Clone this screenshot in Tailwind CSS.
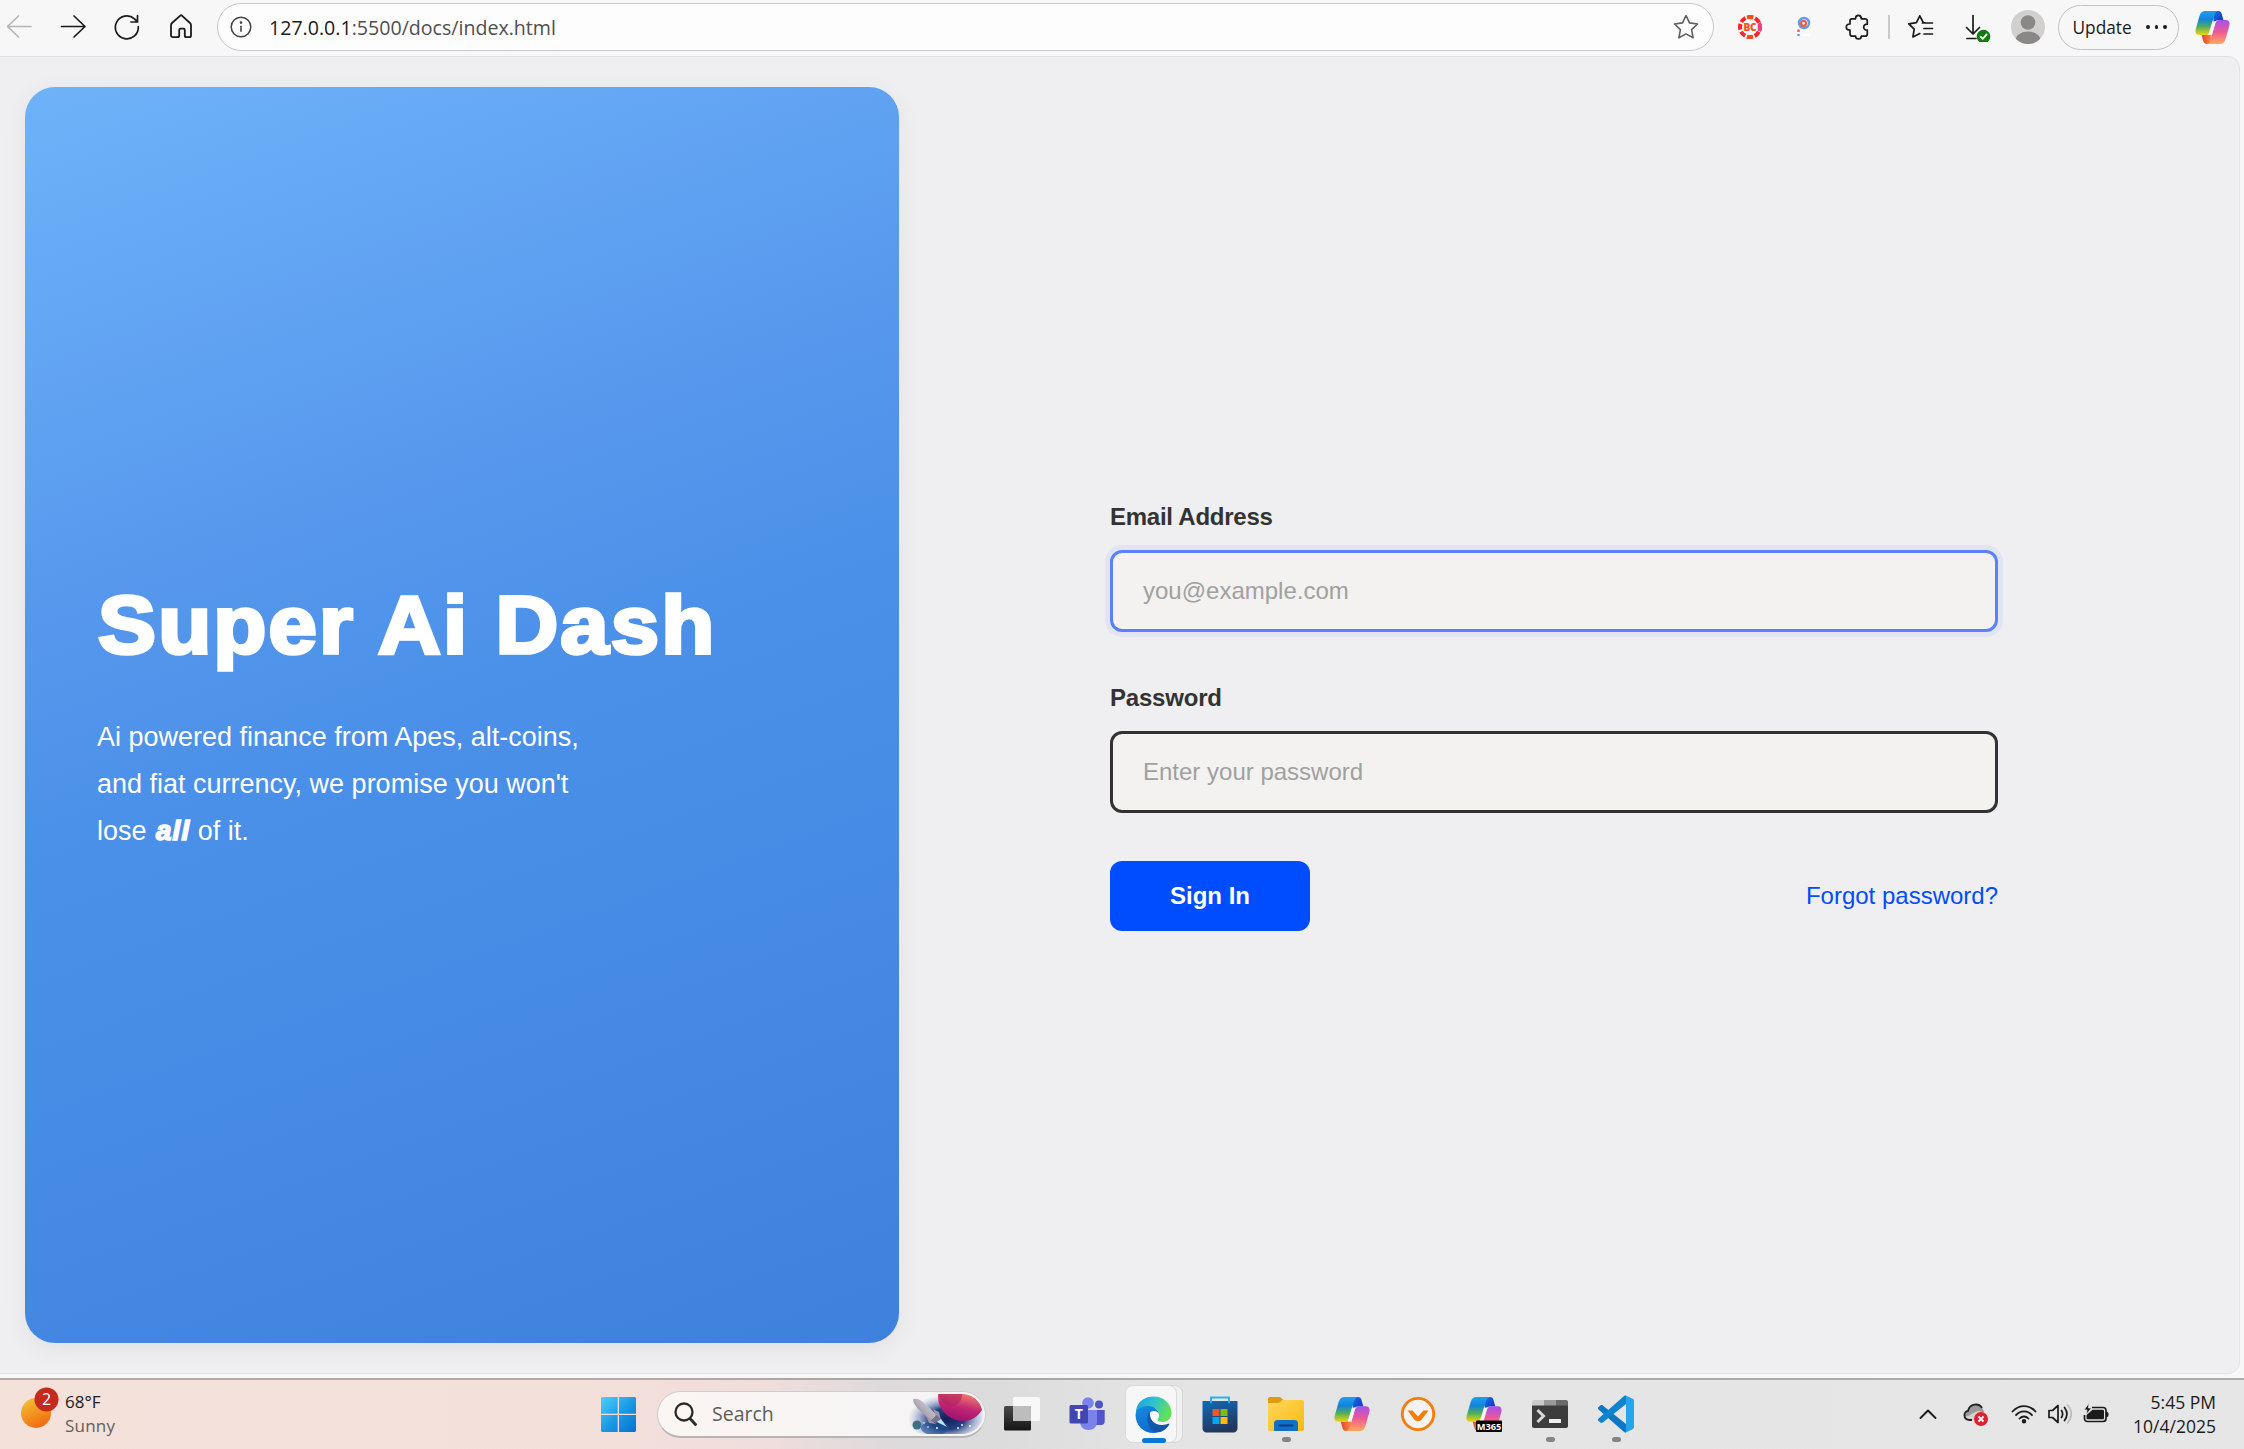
<!DOCTYPE html>
<html lang="en">
<head>
<meta charset="utf-8">
<title>Super Ai Dash</title>
<script src="https://cdn.jsdelivr.net/npm/@tailwindcss/browser@4"></script>
</head>
<body class="w-[2244px] h-[1449px] overflow-hidden flex flex-col bg-[#f7f7f7] font-['Open_Sans','Noto_Sans',sans-serif] text-[#1b1b1b]">

<svg width="0" height="0" class="absolute">
  <defs>
    <linearGradient id="cpA" x1="0" y1="0" x2="0" y2="1"><stop offset="0" stop-color="#1ea0f0"/><stop offset=".35" stop-color="#1283dc"/><stop offset=".65" stop-color="#4fae5c"/><stop offset="1" stop-color="#f8d30c"/></linearGradient>
    <linearGradient id="cpB" x1="0" y1="0" x2="0" y2="1"><stop offset="0" stop-color="#a550f0"/><stop offset=".5" stop-color="#ee5a93"/><stop offset="1" stop-color="#ffa95c"/></linearGradient>
    <linearGradient id="cpC" x1="0" y1="0" x2="1" y2="1"><stop offset="0" stop-color="#1a6fe8"/><stop offset="1" stop-color="#0a2fb4"/></linearGradient>
    <linearGradient id="cpD" x1="0" y1="0" x2="1" y2="0"><stop offset="0" stop-color="#e8412f"/><stop offset="1" stop-color="#fa8a3a"/></linearGradient>
    <symbol id="copilot" viewBox="0 0 36 36">
      <path d="M19 1h5c2 0 3 1.200 3.500 3l1.800 6.500h-5.300c-2.500 0-4 1-5 4z" fill="url(#cpC)"/>
      <path d="M17 35h-5c-2 0-3-1.200-3.500-3L6.700 25.500H12c2.500 0 4-1 5-4z" fill="url(#cpD)"/>
      <path d="M10.500 1H24c-2.500.5-3.500 2.500-4.200 5l-4.200 15c-.8 3-2.300 4.800-5 4.800H4.500C1 25.800-.2 23.200.7 19.700L4.500 6.500C5.500 2.800 7.500 1 10.500 1z" fill="url(#cpA)"/>
      <path d="M25.500 35H12c2.500-.5 3.500-2.500 4.200-5l4.200-15c.8-3 2.300-4.800 5-4.800h6.100c3.500 0 4.700 2.600 3.800 6.100L31.500 29.500c-1 3.700-3 5.500-6 5.500z" fill="url(#cpB)"/>
      <path d="M21.500 11.500l-4 13.800c-1 .5-2.500.5-3.800.2l4.200-13.800z" fill="#f4f4f4"/>
    </symbol>
  </defs>
</svg>

<!-- Browser toolbar -->
<header class="h-14 shrink-0 flex items-start pl-[5px] pr-[14px]">
  <nav class="flex items-center gap-[26px] h-[54px]">
    <svg class="w-7 h-7" viewBox="0 0 28 28" fill="none" stroke="#b5b5b5" stroke-width="1.700" stroke-linecap="round" stroke-linejoin="round"><path d="M26 13.500H3M13.500 3L2.500 13.500 13.500 24"/></svg>
    <svg class="w-7 h-7" viewBox="0 0 28 28" fill="none" stroke="#1b1b1b" stroke-width="1.700" stroke-linecap="round" stroke-linejoin="round"><path d="M2.500 13.500H25.500M15 3L26 13.500 15 24"/></svg>
    <svg class="w-7 h-7" viewBox="0 0 28 28" fill="none" stroke="#1b1b1b" stroke-width="1.700" stroke-linecap="round" stroke-linejoin="round"><path d="M25.300 13.500a11.500 11.500 0 1 1-3.800-7.700L24 8.300M24.500 2.500v6.500h-6.500"/></svg>
    <svg class="w-7 h-7" viewBox="0 0 28 28" fill="none" stroke="#1b1b1b" stroke-width="1.800" stroke-linejoin="round"><path d="M4 12.300c0-1 .4-1.700 1-2.300l8-7.200a1.600 1.600 0 0 1 2.200 0L23 10c.7.600 1 1.300 1 2.300v10.200c0 1-.7 1.700-1.700 1.700h-2.800c-1 0-1.700-.7-1.700-1.700V17c0-.8-.6-1.400-1.400-1.400h-2.800c-.8 0-1.400.6-1.400 1.400v5.500c0 1-.7 1.700-1.700 1.700H5.700c-1 0-1.700-.7-1.700-1.700z"/></svg>
  </nav>
  <div class="mt-[3px] ml-[22px] w-[1497px] h-12 shrink-0 rounded-full border border-[#c8c8c8] bg-[#fdfdfd] flex items-center pl-3 pr-[14px]">
    <svg class="w-[22px] h-[22px]" viewBox="0 0 22 22" fill="none" stroke="#444" stroke-width="1.500"><circle cx="11" cy="11" r="9.800"/><path d="M11 9.800v6" stroke-width="1.600"/><circle cx="11" cy="6.600" r=".6" fill="#444"/></svg>
    <span class="ml-[17px] pt-[2px] text-[19.6px] leading-none whitespace-nowrap text-[#1b1b1b]">127.0.0.1<span class="text-[#4f4f4f]">:5500/docs/index.html</span></span>
    <svg class="ml-auto w-[26px] h-[26px]" viewBox="0 0 26 26" fill="none" stroke="#5e5e5e" stroke-width="1.600" stroke-linejoin="round"><path d="M13 1.500l3.500 7.400 8 1.100-5.900 5.700 1.500 8.100L13 19.900l-7.100 3.900 1.500-8.100L1.500 10l8-1.100z"/></svg>
  </div>
  <div class="flex items-center h-[54px] flex-1 ml-[23px]">
    <svg class="w-[26px] h-[26px]" viewBox="0 0 26 26"><circle cx="13" cy="13" r="10" fill="none" stroke="#f9262b" stroke-width="4" stroke-dasharray="5.850 2" stroke-dashoffset="2.900"/><path d="M9.500 1.800a12 12 0 0 1 7 0l-1 3.200h-5zM9.500 24.200a12 12 0 0 0 7 0l-1-3.200h-5z" fill="#ff4d12"/><path d="M23.800 8a12 12 0 0 1 0 10l-3-1.500v-7z" fill="#f43b86"/><text x="13" y="16.700" text-anchor="middle" font-size="10" font-weight="800" fill="#ff4b16" font-family="Open Sans">BC</text></svg>
    <svg class="ml-[27px] w-[26px] h-[26px]" viewBox="0 0 26 26" fill="none"><circle cx="14" cy="9" r="5" stroke="#5b9bf3" stroke-width="2.400"/><circle cx="13.500" cy="9.300" r="2.500" stroke="#ee5a4a" stroke-width="2.200"/><path d="M8.500 15.500v2.500" stroke="#ef5b4c" stroke-width="2.400"/><path d="M8.500 20v2" stroke="#5b9bf3" stroke-width="2.400"/><path d="M11.500 21h8M11 17h8" stroke="#fff" stroke-width="1.500"/></svg>
    <svg class="ml-[29px] w-[26px] h-[26px]" viewBox="0 0 26 26" fill="none" stroke="#1b1b1b" stroke-width="1.700" stroke-linejoin="round"><path d="M7 4.800h3.500c0-2.200 1.200-3.500 2.900-3.500s2.900 1.300 2.900 3.500h3.700c1.400 0 2.300.9 2.300 2.300v3.100c-2.200-.2-3.600 1.200-3.600 3s1.400 3.300 3.600 3v3.700c0 1.400-.9 2.300-2.300 2.300h-3.700c0 1.600-1.200 2.700-2.800 2.700s-2.900-1.100-2.900-2.700H7.300C5.900 22.200 5 21.300 5 19.900v-3.800c-2.200 0-3.700-1.300-3.700-3.100S2.800 10 5 10V7c0-1.300.7-2.200 2-2.200z"/></svg>
    <span class="ml-[17px] w-[1.5px] h-6 bg-[#c9c9c9]"></span>
    <svg class="ml-[17px] w-[28px] h-[26px]" viewBox="0 0 28 26" fill="none" stroke="#1b1b1b" stroke-width="1.700" stroke-linecap="round" stroke-linejoin="round"><path d="M18 8.800l-1.800-.3L12.800 1.800 9.400 8.600l-7.600 1.200 5.400 5.400L5.900 23l6.900-3.400M15.500 9h10M17 14.500h8.500M17 20h8.500"/></svg>
    <svg class="ml-[26px] w-[30px] h-[30px]" viewBox="0 0 30 30" fill="none" stroke="#1b1b1b" stroke-width="1.700" stroke-linecap="round" stroke-linejoin="round"><path d="M12 3.500v18M5.500 15.500l6.500 6.500 6.500-6.500M6 26.500h9"/><circle cx="22.500" cy="24.500" r="6" fill="#107c10" stroke="#107c10"/><path d="M19.500 24.700l2.200 2.200 4-4.500" stroke="#fff"/></svg>
    <svg class="ml-[20px] w-[34px] h-[34px]" viewBox="0 0 34 34"><clipPath id="av"><circle cx="17" cy="17" r="17"/></clipPath><g clip-path="url(#av)"><rect width="34" height="34" fill="#d2d0ce"/><circle cx="17" cy="12.500" r="7.300" fill="#8a8886"/><ellipse cx="17" cy="30" rx="12.300" ry="8.500" fill="#8a8886"/></g></svg>
    <button class="ml-[13px] w-[121px] h-[45px] shrink-0 rounded-full border border-[#c2c2c2] flex items-center pl-[14px] text-[17.3px] leading-none"><span class="pt-[2px]">Update</span>
      <span class="flex gap-[5px] ml-auto mr-[11px]"><i class="size-[3.5px] rounded-full bg-[#1b1b1b]"></i><i class="size-[3.5px] rounded-full bg-[#1b1b1b]"></i><i class="size-[3.5px] rounded-full bg-[#1b1b1b]"></i></span>
    </button>
    <svg class="ml-auto w-[35px] h-[35px] shrink-0"><use href="#copilot"/></svg>
  </div>
</header>

<!-- Web page -->
<main class="relative -ml-3 w-[2252px] h-[1318px] shrink-0 rounded-xl border border-[#e2e2e4] bg-[#efeff1] flex">
  <section class="ml-9 mt-[30px] w-[874px] h-[1256px] shrink-0 rounded-[30px] bg-[linear-gradient(160deg,#6eb3f9_0%,#5798ed_33%,#4a90e8_50%,#3e81dd_100%)] shadow-[0_6px_24px_rgba(0,0,0,0.06)] pl-[72px] pt-[488px] text-white font-['Liberation_Sans',Arial,sans-serif]">
    <h1 class="text-[82px] leading-[100px] font-bold whitespace-nowrap tracking-[2px] pl-[1px] origin-left scale-x-[1.06] [-webkit-text-stroke:3.6px_white]">Super Ai Dash</h1>
    <p class="mt-[39px] text-[27px] leading-[46.8px] w-[520px]">Ai powered finance from Apes, alt-coins,<br>and fiat currency, we promise you won't<br>lose <em class="font-bold tracking-[1.2px] pl-[2px] text-[27.5px] leading-none [-webkit-text-stroke:1.6px_white]">all</em> of it.</p>
  </section>
  <form class="ml-[211px] mt-[446px] w-[888px] flex flex-col items-stretch text-[24px] font-['Liberation_Sans',Arial,sans-serif]">
    <label class="leading-7 font-bold text-[#333] tracking-[-0.25px]">Email Address</label>
    <div class="mt-[19px] h-[82px] rounded-xl border-3 border-[#5c80fa] bg-[#f3f2f0] ring-5 ring-[#e0e4f3] flex items-center pl-[30px] text-[#a0a0a0]">you@example.com</div>
    <label class="mt-[52px] leading-7 font-bold text-[#333] tracking-[-0.2px]">Password</label>
    <div class="mt-[19px] h-[82px] rounded-xl border-3 border-[#333] bg-[#f3f2f0] flex items-center pl-[30px] text-[#a0a0a0]">Enter your password</div>
    <div class="mt-12 flex justify-between items-center">
      <button type="button" class="w-[200px] h-[70px] rounded-xl bg-[#004cff] text-white font-bold">Sign In</button>
      <a class="text-[#004cff]">Forgot password?</a>
    </div>
  </form>
</main>

<!-- Taskbar -->
<footer class="mt-[4px] h-[71px] shrink-0 border-t-2 border-black/25 bg-[linear-gradient(90deg,#f4e1da_0px,#f3e0da_590px,#f0dedc_760px,#dedadc_880px,#dcdcdd_1000px,#e4e4e4_1150px,#e6e6e6_2244px)] flex">
  <div class="w-[590px] flex pl-5 pt-[4px]">
    <svg class="w-10 h-12" viewBox="0 0 40 48"><defs><linearGradient id="sun" x1=".2" y1="0" x2=".7" y2="1"><stop offset="0" stop-color="#f1c232"/><stop offset="1" stop-color="#f2660f"/></linearGradient></defs><circle cx="16" cy="29" r="15" fill="url(#sun)"/><circle cx="26.500" cy="15.500" r="12" fill="#c42b1c"/><text x="26.500" y="21.300" text-anchor="middle" font-size="16" fill="#fff" font-family="Open Sans">2</text></svg>
    <div class="ml-[5px] mt-[6px] text-[17px] leading-6"><div>68°F</div><div class="text-[#606060] tracking-[0.2px]">Sunny</div></div>
  </div>
  <div class="flex items-center h-[68px]">
    <svg class="ml-[11px] w-[35px] h-[35px]" viewBox="0 0 35 35"><defs><linearGradient id="win" x1="0" y1="0" x2="1" y2="1"><stop offset="0" stop-color="#4fd0fb"/><stop offset=".5" stop-color="#1c9be6"/><stop offset="1" stop-color="#0571cf"/></linearGradient></defs><path fill="url(#win)" d="M1 0h15.700v16.700H0V1zM18 0h16l1 1v15.700H18zM0 18h16.700v17H1l-1-1zM18 18h17v16l-1 1H18z"/></svg>
    <div class="ml-[21px] w-[329px] h-[47px] rounded-full border border-[#d3cccb] border-b-2 border-b-[#b9b4b4] bg-[linear-gradient(90deg,#fbf5f3,#f5f5f6)] flex items-center pl-4">
      <svg class="w-[23px] h-[24px]" viewBox="0 0 23 24" fill="none" stroke="#2a2a2a" stroke-width="2.300" stroke-linecap="round"><circle cx="10" cy="10" r="8.500"/><path d="M16 16.500l5.500 6" stroke-width="2.800"/></svg>
      <span class="ml-[15px] pt-px text-[19.500px] text-[#5c5c5c]">Search</span>
      <svg class="ml-auto mr-[2px] w-[76px] h-[40px]" viewBox="0 0 76 40">
        <defs>
          <radialGradient id="space"><stop offset="0" stop-color="#131f5c"/><stop offset=".45" stop-color="#24407f"/><stop offset=".8" stop-color="#8b9cc8" stop-opacity=".5"/><stop offset="1" stop-color="#c3cbe0" stop-opacity=".1"/></radialGradient>
          <linearGradient id="planet" x1=".7" y1="0" x2=".3" y2="1"><stop offset="0" stop-color="#f0806b"/><stop offset=".5" stop-color="#c02574"/><stop offset="1" stop-color="#96106c"/></linearGradient>
          <linearGradient id="hull" x1="0" y1="1" x2="1" y2="0"><stop offset="0" stop-color="#7a7484"/><stop offset="1" stop-color="#ece9f0"/></linearGradient>
          <clipPath id="pill"><path d="M0 0h55c12 0 21 9 21 20s-9 20-21 20H18C6 40 1 32 2 22z"/></clipPath>
        </defs>
        <g clip-path="url(#pill)">
          <ellipse cx="40" cy="25" rx="39" ry="24" fill="url(#space)"/>
          <ellipse cx="28" cy="34" rx="14" ry="7" fill="#1a4d92" opacity=".6"/>
          <path d="M31 0h28c9 2 15 9 16 16-5 8-12 11-20 11C41 26 30 15 31 0z" fill="url(#planet)"/>
          <path d="M32 0h23c0 8-5 12-11 12C38 12 33 7 32 0z" fill="#b3205a" opacity=".6"/>
          <circle cx="10" cy="31" r="4.500" fill="#3d6e86"/>
          <path d="M6 5c5-1 8 1 12 5l12 11-6 6L11 15C8 11 6 9 6 5z" fill="url(#hull)"/>
          <path d="M26 15l6 3 2 8-5-3zM19 22l5 4 5 4-7-1z" fill="#9a95a8"/>
          <path d="M24 27l6-6 4 5-5 3z" fill="#77718a"/>
          <path d="M30 28l4-3 6 8z" fill="#bfe3ff"/>
          <g fill="#fff"><circle cx="30" cy="34" r="1"/><circle cx="51" cy="34" r=".9"/><circle cx="55" cy="31" r=".9"/><circle cx="63" cy="32" r="1"/><circle cx="21" cy="33" r=".8"/><circle cx="17" cy="29" r=".8"/></g>
        </g>
      </svg>
    </div>
    <svg class="ml-[18px] w-[38px] h-[36px]" viewBox="0 0 38 36"><defs><linearGradient id="tv" x1="0" y1="0" x2="0" y2="1"><stop offset="0" stop-color="#4a4a4a"/><stop offset="1" stop-color="#151515"/></linearGradient></defs><rect x="0" y="10" width="27" height="24.500" rx="1.500" fill="url(#tv)"/><rect x="9" y="1" width="27" height="24" rx="1.500" fill="#fbfbfb" opacity=".9"/><path d="M9 10h18v15H9z" fill="#bdbdbd"/></svg>
    <svg class="ml-[26px] w-[38px] h-[36px]" viewBox="0 0 38 36"><circle cx="31" cy="8.500" r="4" fill="#4f55c4"/><path d="M28 14h8.700v11.500c0 2.200-1.500 3.500-3.500 3.500H28z" fill="#4f56cc"/><circle cx="20" cy="7" r="5.800" fill="#7b83eb"/><path d="M12 14h17v11.500c0 5-3.500 8.500-8.500 8.500S12 30.500 12 25.500z" fill="#7b83eb"/><rect x="1.500" y="9" width="18.500" height="18.500" rx="1.500" fill="#4147b0"/><text x="10.700" y="23.200" text-anchor="middle" font-size="14" font-weight="700" fill="#fff" font-family="Open Sans">T</text></svg>
    <div class="relative ml-[19px] w-[58px] h-[58px] flex">
      <div class="absolute inset-y-0 left-4 right-0 rounded-lg bg-[#f1f1f1] border border-[#d6d6d6]"></div>
      <div class="relative w-[52px] rounded-lg bg-[#f7f7f7] border border-[#dadada] flex items-center justify-center">
        <svg class="w-[37px] h-[37px] ml-[5px]" viewBox="0 0 37 37"><defs><linearGradient id="eg1" x1="0" y1="0" x2="1" y2=".4"><stop offset="0" stop-color="#1e96dc"/><stop offset=".5" stop-color="#2cc3d0"/><stop offset="1" stop-color="#63e05a"/></linearGradient><linearGradient id="eg2" x1="0" y1="0" x2=".5" y2="1"><stop offset="0" stop-color="#1b8ae0"/><stop offset="1" stop-color="#0a6ccf"/></linearGradient></defs>
          <path d="M1 14C3 5 10 .5 18.500.5 29 .5 36.500 8 36.500 17c0 5.500-4 9-9 9-3 0-5-1-5-2.300 0-.8 1.500-1.500 1.500-4.700 0-4.500-4-8-9.500-8C7.500 11 1.500 14.500.8 20z" fill="url(#eg1)"/>
          <path d="M.6 19C1 13.500 6 10 12.500 10c7 0 11 4.500 11.500 8-1-2-3-3-5-3-4 0-6 3.500-6 8 0 7 5 13 10 13.600C10 39 .5 30 .6 19z" fill="url(#eg2)"/>
          <path d="M12.500 22c0-2.500 1-5 2.500-6-1 7 4 13 12 13 3 0 5-1 6.500-1.500 1 0 1 .8.500 1.500-2.500 4-7 7.500-12.500 7.500-5-.5-9-7-9-14.500z" fill="#1257a8"/></svg>
      </div>
      <span class="absolute left-[17px] bottom-0 w-6 h-[5px] rounded-full bg-[#0b78d4]"></span>
    </div>
    <svg class="ml-[19px] w-[36px] h-[37px]" viewBox="0 0 36 37"><defs><linearGradient id="st" x1="0" y1="0" x2=".3" y2="1"><stop offset="0" stop-color="#0f6cb8"/><stop offset="1" stop-color="#22375f"/></linearGradient></defs><path d="M.5 5h35v27.500c0 2.200-1.800 4-4 4h-27c-2.200 0-4-1.800-4-4z" fill="url(#st)"/><path d="M9 7V1.500h18V7" fill="none" stroke="#2ab0ee" stroke-width="2"/><path fill="#f35325" d="M10.500 13h7v7h-7z"/><path fill="#81bc06" d="M18.500 13h7v7h-7z"/><path fill="#05a6f0" d="M10.500 21h7v7h-7z"/><path fill="#ffba08" d="M18.500 21h7v7h-7z"/></svg>
    <div class="relative ml-[30px]">
      <svg class="w-[36px] h-[34px]" viewBox="0 0 36 34"><defs><linearGradient id="fd" x1="0" y1="0" x2="1" y2="1"><stop offset="0" stop-color="#ffd75e"/><stop offset="1" stop-color="#f9b90f"/></linearGradient></defs><path d="M0 2C0 1 .8 0 2 0h10l4 3.500V9H0z" fill="#dd9d0c"/><path d="M0 6h11l3.500-3H34c1.200 0 2 .8 2 2v27c0 1-.8 2-2 2H2c-1.200 0-2-1-2-2z" fill="url(#fd)"/><path d="M6 34v-7.500C6 24 7.500 23 9.500 23h17c2 0 3.500 1 3.500 3.500V34z" fill="#0f6fc9"/><path d="M11.500 28.500h13" stroke="#0a3f80" stroke-width="2" stroke-linecap="round"/></svg>
      <span class="absolute left-[14px] top-[40px] w-[9px] h-[5px] rounded-full bg-[#858585]"></span>
    </div>
    <svg class="ml-[30px] w-9 h-9"><use href="#copilot"/></svg>
    <svg class="ml-[30px] w-9 h-9" viewBox="0 0 36 36"><circle cx="18" cy="18" r="15.700" fill="#f3f3f3" stroke="#f57c0a" stroke-width="2.800"/><path d="M7.500 14.500h5l5.500 6 5.500-6h5l-7 9.200c-1 1-2.200 1.300-3.500 1.300s-2.500-.3-3.500-1.300z" fill="#f57c0a"/></svg>
    <svg class="ml-[30px] w-9 h-9" viewBox="0 0 36 36"><use href="#copilot"/><rect x="10" y="24.500" width="26" height="11.500" rx="1" fill="#000"/><text x="23" y="33.600" text-anchor="middle" font-size="9.300" font-weight="700" fill="#fff" font-family="Open Sans">M365</text></svg>
    <div class="relative ml-[30px]">
      <svg class="w-[36px] h-[28px]" viewBox="0 0 36 28"><path d="M0 5h36v21c0 1-.8 2-2 2H2c-1.200 0-2-1-2-2z" fill="#3d3d3d"/><path d="M0 5.500V2C0 .8.800 0 2 0h10v5.500z" fill="#cacaca"/><path d="M12 0h12v5.500H12z" fill="#999"/><path d="M24 0h10c1.200 0 2 .8 2 2v3.500H24z" fill="#6b6b6b"/><path d="M5.500 10l6 6-6 6" fill="none" stroke="#d8d8d8" stroke-width="3"/><rect x="17" y="19" width="12" height="4" rx=".5" fill="#f0f0f0"/></svg>
      <span class="absolute left-[14px] top-[37px] w-[9px] h-[5px] rounded-full bg-[#858585]"></span>
    </div>
    <div class="relative ml-[30px]">
      <svg class="w-[36px] h-[38px]" viewBox="0 0 36 38"><path d="M0 12.500l2.300-2c.8-.6 1.700-.6 2.500 0L28 29v8.500c-1 0-1.800-.3-2.500-1L.5 14.500c-.6-.6-.6-1.400-.5-2z" fill="#0a78c2"/><path d="M0 25.500l2.300 2c.8.600 1.700.6 2.500 0L28 9V.5c-1 0-1.800.3-2.500 1L.5 23.500c-.6.600-.6 1.400-.5 2z" fill="#0f83ce"/><path d="M26.500.7c.5-.3 1.200-.3 1.900 0l6.200 3c.9.400 1.400 1.200 1.400 2.200v26.200c0 1-.5 1.800-1.400 2.200l-6.200 3c-.7.300-1.400.3-1.900 0 .9.200 1.500-.5 1.500-1.500V2.200c0-1-.6-1.700-1.500-1.500z" fill="#25a4f0"/></svg>
      <span class="absolute left-[14px] top-[42px] w-[9px] h-[5px] rounded-full bg-[#858585]"></span>
    </div>
  </div>
  <div class="ml-auto flex items-center h-[67px] pr-[28px]">
    <svg class="w-[18px] h-3" viewBox="0 0 18 12" fill="none" stroke="#1b1b1b" stroke-width="1.900" stroke-linecap="round" stroke-linejoin="round"><path d="M1.500 10L9 2.500l7.500 7.500"/></svg>
    <svg class="ml-[26px] w-[26px] h-[26px]" viewBox="0 0 26 26"><path d="M10 19H6c-6 0-6-8-1-9 1-7 10-9 14-3 1 1 2 3 2 4z" fill="#9b9b9b"/><path d="M2 15C7 16 9 11 16 10l6 2-12 7H6c-2 0-4-2-4-4z" fill="#d2d2d2"/><path d="M9 19H6.500C0 19 0 10.500 5 10 6.500 2.500 16 1.500 19 7" fill="none" stroke="#222" stroke-width="1.800"/><circle cx="18" cy="18" r="7" fill="#dc2130"/><path d="M15.500 15.500l5 5M20.500 15.500l-5 5" stroke="#fff" stroke-width="1.800"/></svg>
    <svg class="ml-[22px] w-[26px] h-[20px]" viewBox="0 0 26 20" fill="none" stroke="#1b1b1b" stroke-width="1.800" stroke-linecap="round"><path d="M1.500 7.500c6.500-7.300 16.500-7.300 23 0M5 11.200c4.500-5 11.500-5 16 0M8.600 14.500c2.500-2.700 6.300-2.700 8.800 0"/><circle cx="13" cy="17.300" r="1.300" fill="#1b1b1b"/></svg>
    <svg class="ml-[10px] w-[26px] h-[22px]" viewBox="0 0 26 22" fill="none" stroke="#1b1b1b" stroke-width="1.700" stroke-linecap="round" stroke-linejoin="round"><path d="M2 7.500h3.500L11 2.500v17l-5.500-5H2z"/><path d="M14.500 7.500c1.300 2 1.300 5 0 7M17.500 4.500c3 4 3 9 0 13"/><path d="M20.500 2c5 5.500 5 12.500 0 18" stroke="#bdbdbd"/></svg>
    <svg class="ml-[10px] w-[26px] h-[22px]" viewBox="0 0 26 22"><path d="M9 4.500h11c1.800 0 3 1.200 3 3v8c0 1.800-1.200 3-3 3H4.500c-1.800 0-3-1.200-3-3V12" fill="none" stroke="#1b1b1b" stroke-width="1.700"/><path d="M9.500 6.700h10c1 0 1.500.5 1.500 1.500v6.600c0 1-.5 1.500-1.500 1.500H5c-1 0-1.500-.5-1.500-1.500V12z" fill="#1b1b1b"/><path d="M23 9h1c1 0 1.500.7 1.500 2.500s-.5 2.500-1.500 2.500h-1z" fill="#1b1b1b"/><path d="M6 0L1 7h3l-1 5 5.500-7H5.500z" fill="#1b1b1b" stroke="#e6e6e6" stroke-width=".8"/></svg>
    <div class="ml-[24px] text-right text-[17.500px] leading-6 whitespace-nowrap"><div>5:45 PM</div><div>10/4/2025</div></div>
  </div>
</footer>
</body>
</html>
